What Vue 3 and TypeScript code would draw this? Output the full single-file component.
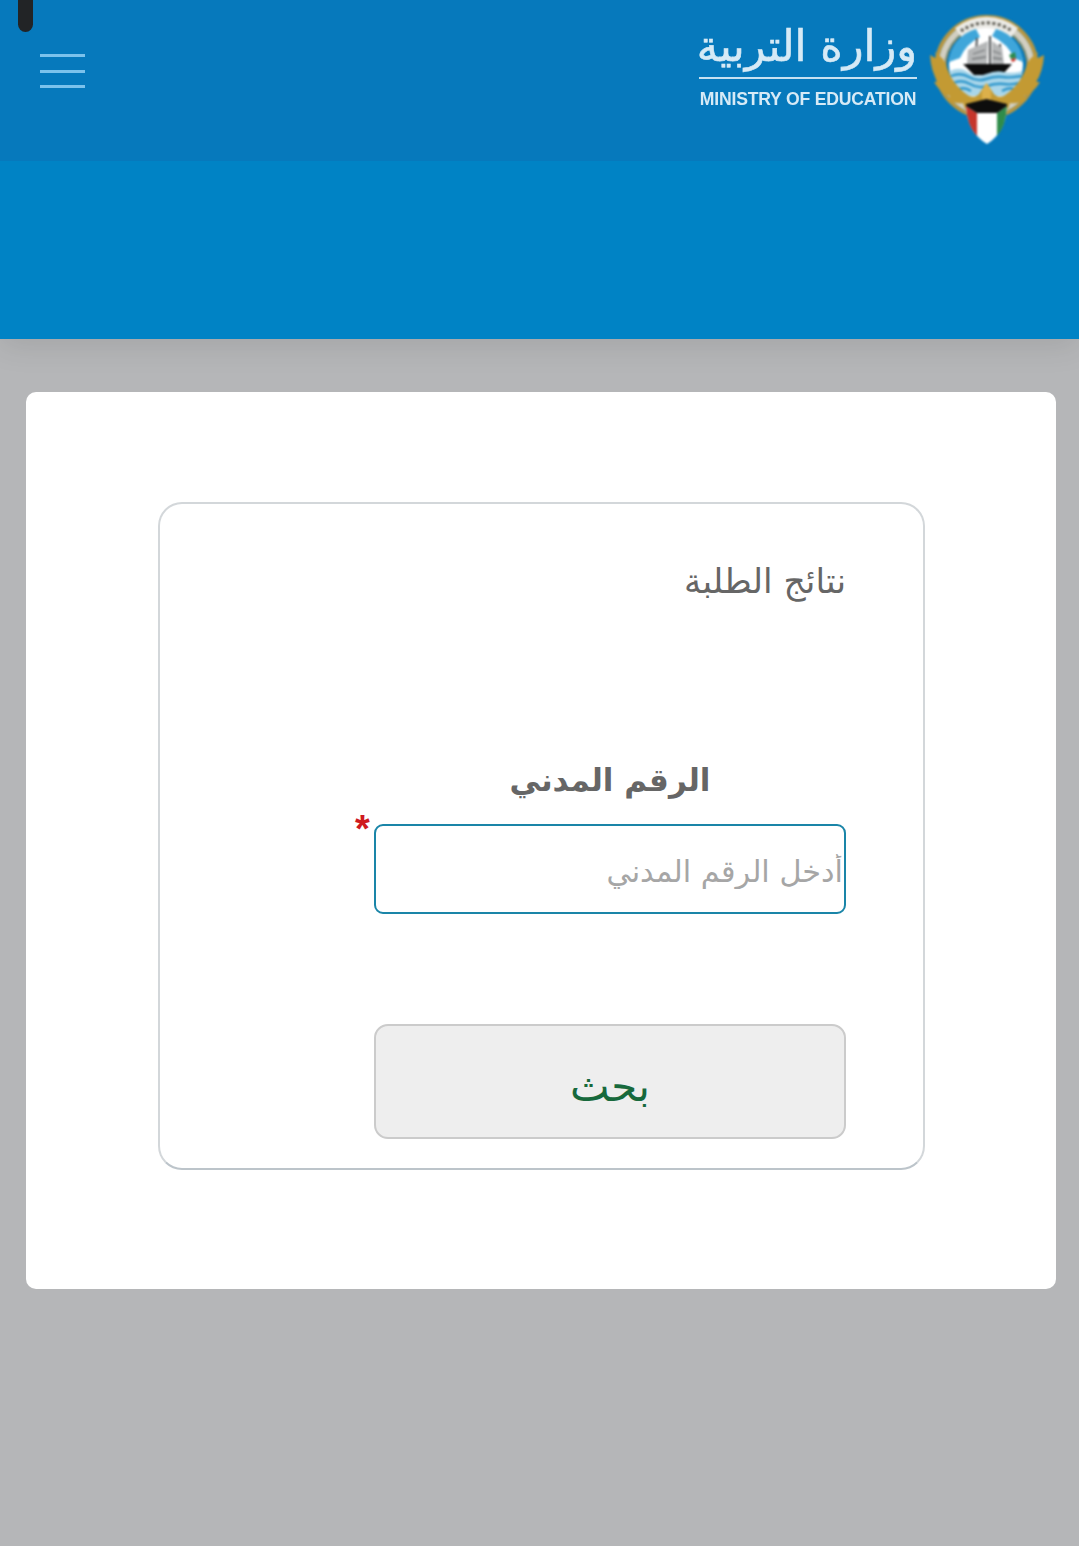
<template>
  <div class="page" dir="rtl">
    <span class="notch"></span>

    <header class="top-bar">
      <div class="brand">
        <svg class="emblem" viewBox="0 0 114 132" role="img" aria-label="شعار دولة الكويت">
          <!-- wreath -->
          <circle cx="56.5" cy="53" r="50" fill="none" stroke="#b8963f" stroke-width="4" />
          <circle cx="56.5" cy="53" r="45" fill="none" stroke="#d3cfc0" stroke-width="6" />
          <circle cx="56.5" cy="53" r="41" fill="none" stroke="#a98f4f" stroke-width="1.5" />
          <path d="M25 14 A50 50 0 0 1 88 14 L80 25 A38 38 0 0 0 33 25 Z" fill="#ecebe6" />
          <path d="M31 17 A44 44 0 0 1 82 17" fill="none" stroke="#5d5b52" stroke-width="3" stroke-dasharray="3 2.5" />
          <circle cx="56" cy="51" r="37" fill="#fff" />
          <!-- sky -->
          <path d="M19 48 A37 37 0 0 1 46 15 L50 23 Q36 30 30 44 Z" fill="#3fa6da" />
          <path d="M93 48 A37 37 0 0 0 66 15 L62 22 Q78 30 84 44 Z" fill="#3fa6da" />
          <!-- dhow -->
          <path d="M47 24 L45 52 M60 22 L60 52 M70 30 L71 52" stroke="#4d5052" stroke-width="2" fill="none" />
          <path d="M38 36 L58 27 L57 50 L37 50 Z M62 27 L72 34 L74 50 L62 50 Z" fill="#b5b7b8" />
          <path d="M43 40 L55 36 M42 45 L56 43 M63 37 L71 40 M63 44 L72 45" stroke="#76797b" stroke-width="1.3" fill="none" />
          <path d="M33 50 L82 50 L72 61 L44 61 Z" fill="#0d0d0d" />
          <path d="M79 41 L85 38 L86 44 L81 45 Z" fill="#2c8a4b" />
          <path d="M81 45 L86 44 L85 47 L82 48 Z" fill="#c8352c" />
          <!-- sea -->
          <path d="M20 57 Q30 52 38 58 T56 60 T74 58 T92 57 Q91 72 80 82 L32 82 Q22 70 20 57 Z" fill="#a9d6ea" />
          <path d="M21 62 Q31 58 39 63 T56 65 T73 63 T91 62 M23 69 Q32 65 40 70 T57 72 T74 70 T89 69 M27 76 Q34 72 41 77 M72 77 Q80 72 86 76" fill="none" stroke="#2f97cc" stroke-width="2.4" />
          <!-- falcon wings -->
          <path d="M0 41 L7 45 L5 38 L13 45 L16 50 Q21 70 39 82 Q47 85 51 77 Q56 68 62 77 Q66 85 74 82 Q92 70 97 50 L100 45 L108 38 L106 45 L114 41 Q113 58 106 68 L110 68 Q103 80 94 82 L97 86 Q87 90 80 89 L78 95 L35 95 L33 89 Q26 90 17 86 L20 82 Q11 80 4 68 L8 68 Q1 58 0 41 Z" fill="#c39a33" />
          <path d="M56.5 69 Q64 76 60 88 L53 88 Q49 76 56.5 69 Z" fill="#dcb04a" />
          <!-- flag shield -->
          <path d="M36 92 L77 92 Q76 118 57 130 Q37 118 36 92 Z" fill="#fff" />
          <path d="M36 92 L47 99 L47 122 Q37 112 36 92 Z" fill="#c6352b" />
          <path d="M77 92 L67 99 L67 122 Q76 112 77 92 Z" fill="#2f8c4a" />
          <path d="M36 90 L56.5 85 L77 90 L77 92 L67 99 L47 99 L36 92 Z" fill="#0d0d0d" />
        </svg>
        <div class="wordmark">
          <span class="wordmark-ar">وزارة التربية</span>
          <span class="wordmark-en" dir="ltr">MINISTRY OF EDUCATION</span>
        </div>
      </div>
      <button class="menu-btn" type="button" aria-label="menu">
        <i></i><i></i><i></i>
      </button>
    </header>

    <div class="band"></div>

    <main class="card">
      <section class="box">
        <h1 class="title">نتائج الطلبة</h1>
        <form class="form" @submit.prevent="search">
          <label class="label" for="civil-id">الرقم المدني</label>
          <div class="field">
            <input id="civil-id" v-model="civilId" class="input" type="text" placeholder="أدخل الرقم المدني" />
            <span class="required">*</span>
          </div>
          <button class="submit" type="submit">بحث</button>
        </form>
      </section>
    </main>
  </div>
</template>

<script setup lang="ts">
import { ref } from 'vue'

const civilId = ref('')

const search = () => {
  civilId.value = civilId.value.trim()
}
</script>

<style>
html,
body {
  margin: 0;
  background: #b5b6b8;
}
</style>

<style scoped>
.page {
  position: relative;
  width: 1079px;
  height: 1546px;
  overflow: hidden;
  background: #b5b6b8;
  font-family: "DejaVu Sans", "Noto Sans", sans-serif;
}

.notch {
  position: absolute;
  z-index: 2;
  top: -10px;
  left: 18px;
  width: 15px;
  height: 42px;
  border-radius: 8px;
  background: #222426;
}

.top-bar {
  position: relative;
  z-index: 1;
  display: flex;
  justify-content: space-between;
  align-items: flex-start;
  height: 161px;
  background: #0679bc;
}

.brand {
  display: flex;
  align-items: flex-start;
  gap: 13px;
  padding: 14px 35px 0 0;
}

.emblem {
  width: 114px;
  height: 132px;
  filter: blur(0.9px);
}

.wordmark {
  display: flex;
  flex-direction: column;
  align-items: stretch;
  width: 218px;
  padding-top: 4px;
  color: #d6eaf6;
  filter: blur(0.5px);
}

.wordmark-ar {
  height: 59px;
  border-bottom: 2px solid #c6e1f2;
  font-size: 43px;
  line-height: 56px;
  white-space: nowrap;
  text-align: center;
  -webkit-text-stroke: 0.6px #d6eaf6;
}

.wordmark-en {
  margin-top: 11px;
  font-family: "Liberation Sans", sans-serif;
  font-size: 17.6px;
  font-weight: 700;
  line-height: 18px;
  letter-spacing: -0.2px;
  white-space: nowrap;
  text-align: center;
}

.menu-btn {
  display: flex;
  flex-direction: column;
  gap: 12.5px;
  width: 45px;
  margin: 54px 0 0 40px;
  padding: 0;
  border: 0;
  background: none;
}

.menu-btn i {
  display: block;
  height: 3px;
  background: #7cc2ec;
}

.band {
  position: relative;
  height: 178px;
  background: #0083c5;
  box-shadow: 0 6px 30px rgba(0, 0, 0, 0.1);
}

.card {
  margin: 53px 23px 0 26px;
  padding: 110px 131px 119px 132px;
  border-radius: 10px;
  background: #fff;
}

.box {
  height: 668px;
  box-sizing: border-box;
  padding: 52px 77px 0 0;
  border: 2px solid #d3d7da;
  border-bottom-color: #bcc4ca;
  border-radius: 24px;
}

.title {
  margin: 0;
  color: #666;
  font-size: 34.5px;
  font-weight: 400;
  line-height: 50px;
}

.form {
  display: flex;
  flex-direction: column;
  width: 472px;
  margin-top: 149px;
}

.label {
  color: #666;
  font-size: 31px;
  font-weight: 700;
  line-height: 50px;
  text-align: center;
}

.field {
  position: relative;
  margin-top: 19px;
}

.input {
  display: block;
  width: 100%;
  height: 90px;
  box-sizing: border-box;
  padding: 5px 1px 0;
  border: 2px solid #1a85a8;
  border-radius: 9px;
  outline: 0;
  background: #fff;
  color: #555;
  font-family: inherit;
  font-size: 30.3px;
}

.input::placeholder {
  color: #a6a6a6;
  opacity: 1;
}

.required {
  position: absolute;
  top: -15px;
  left: -19px;
  color: #cf1a1f;
  font-family: "Liberation Sans", sans-serif;
  font-size: 38px;
  font-weight: 700;
  line-height: 40px;
}

.submit {
  height: 115px;
  margin-top: 110px;
  padding: 10px 0 0;
  border: 2px solid #cbcbcb;
  border-radius: 14px;
  background: #eee;
  color: #17693c;
  font-family: inherit;
  font-size: 42px;
}
</style>
